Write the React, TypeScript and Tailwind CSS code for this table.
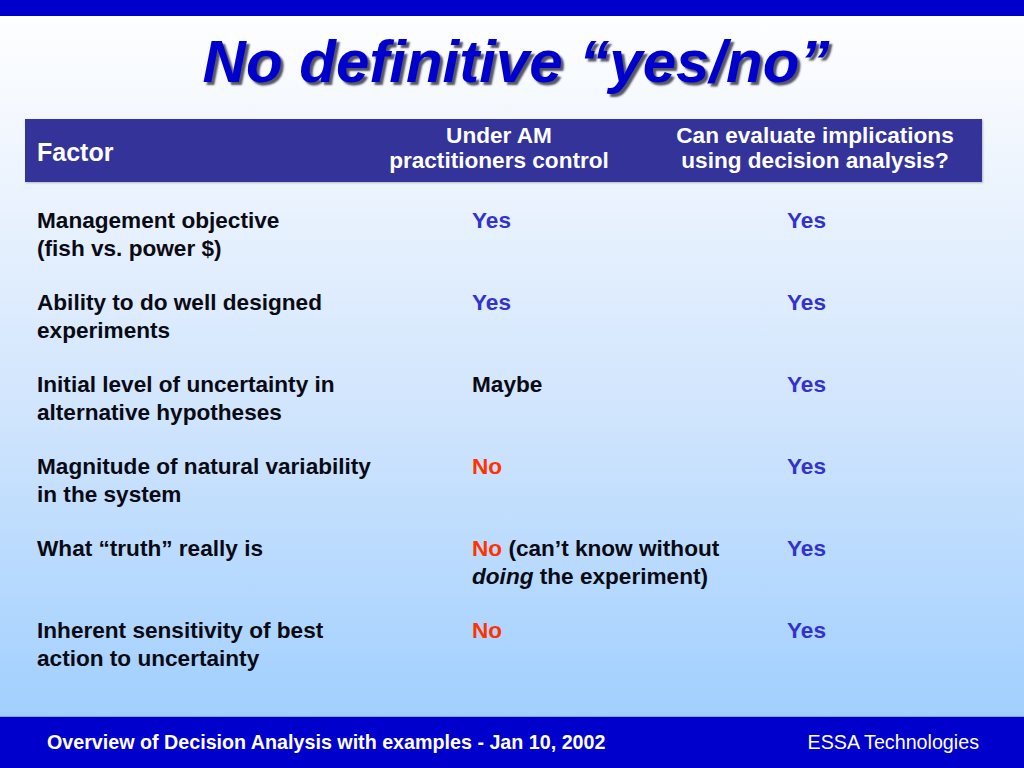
import React from "react";

const Y = ({ children }: { children: React.ReactNode }) => (
  <span className="text-[#3333cc]">{children}</span>
);
const N = ({ children }: { children: React.ReactNode }) => (
  <span className="text-[#ff3300]">{children}</span>
);

const rows: { f: React.ReactNode; c2: React.ReactNode; c3: React.ReactNode }[] = [
  {
    f: (
      <>
        Management objective
        <br />
        (fish vs. power $)
      </>
    ),
    c2: <Y>Yes</Y>,
    c3: <Y>Yes</Y>,
  },
  {
    f: (
      <>
        Ability to do well designed
        <br />
        experiments
      </>
    ),
    c2: <Y>Yes</Y>,
    c3: <Y>Yes</Y>,
  },
  {
    f: (
      <>
        Initial level of uncertainty in
        <br />
        alternative hypotheses
      </>
    ),
    c2: <span>Maybe</span>,
    c3: <Y>Yes</Y>,
  },
  {
    f: (
      <>
        Magnitude of natural variability
        <br />
        in the system
      </>
    ),
    c2: <N>No</N>,
    c3: <Y>Yes</Y>,
  },
  {
    f: <>What “truth” really is</>,
    c2: (
      <>
        <N>No</N> (can’t know without
        <br />
        <i>doing</i> the experiment)
      </>
    ),
    c3: <Y>Yes</Y>,
  },
  {
    f: (
      <>
        Inherent sensitivity of best
        <br />
        action to uncertainty
      </>
    ),
    c2: <N>No</N>,
    c3: <Y>Yes</Y>,
  },
];

export default function App() {
  return (
    <div
      className="w-[1024px] h-[768px] flex flex-col overflow-hidden bg-[linear-gradient(to_bottom,#ffffff_0%,#f4f8fe_15%,#cfe4fd_55%,#99ccff_100%)]"
      style={{ fontFamily: '"Liberation Sans", Arial, sans-serif' }}
    >
      <div className="h-4 bg-[#0000cc] shrink-0" />
      <div className="h-[103px] shrink-0 pt-4 flex justify-center">
        <h1 className="text-[60px] leading-[60px] font-bold italic text-[#0000cc] [text-shadow:3px_3px_2px_#555566] pl-[8px]">
          No definitive “yes/no”
        </h1>
      </div>
      <div className="ml-[25px] w-[957px] h-[63px] shrink-0 bg-[#333399] flex text-white font-bold shadow-[1px_1px_2px_rgba(0,0,0,0.25)]">
        <div className="w-[336px] shrink-0 pl-3 flex items-center pt-[4px] text-[25px]">Factor</div>
        <div className="w-[276px] shrink-0 text-center text-[22.6px] leading-[25px] pt-[4px] whitespace-nowrap">
          Under AM
          <br />
          practitioners control
        </div>
        <div className="w-[356px] shrink-0 text-center text-[22.6px] leading-[25px] pt-[4px] whitespace-nowrap">
          Can evaluate implications
          <br />
          using decision analysis?
        </div>
      </div>
      <div className="pt-[25px] flex flex-col gap-[26px] text-[22.6px] leading-[28px] font-bold text-[#0a0a14]">
        {rows.map((r, i) => (
          <div key={i} className="flex h-[56px] whitespace-nowrap">
            <div className="w-[472px] pl-[37px] shrink-0">{r.f}</div>
            <div className="w-[315px] shrink-0">{r.c2}</div>
            <div>{r.c3}</div>
          </div>
        ))}
      </div>
      <div className="flex-1" />
      <div className="h-[52px] shrink-0 bg-[#0000cc] border-t border-[#8c9cf0] flex items-center justify-between pl-[47px] pr-[45px] text-white text-[19.7px]">
        <span className="font-bold">Overview of Decision Analysis with examples - Jan 10, 2002</span>
        <span>ESSA Technologies</span>
      </div>
    </div>
  );
}
